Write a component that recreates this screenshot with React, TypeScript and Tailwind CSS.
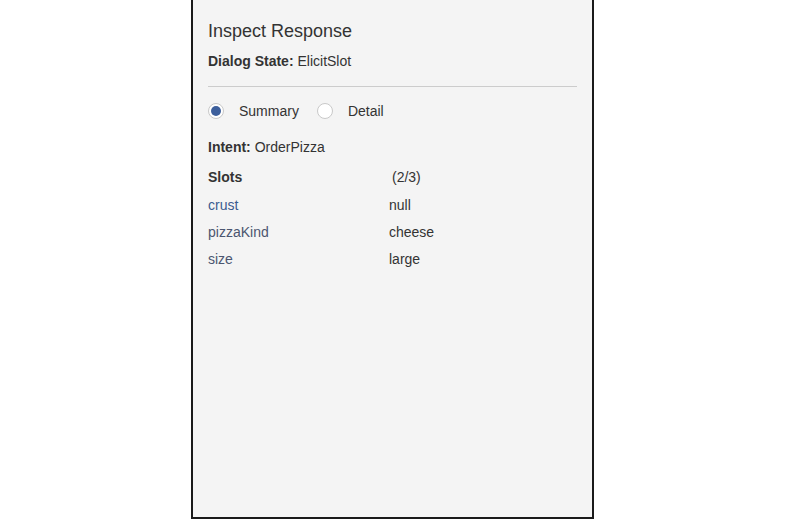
import React from 'react';

interface Slot {
    name: string;
    value: string;
    color: string;
}

const slots: Slot[] = [
    {name: 'crust', value: 'null', color: 'text-[#3a5b90]'},
    {name: 'pizzaKind', value: 'cheese', color: 'text-[#4b5670]'},
    {name: 'size', value: 'large', color: 'text-[#4b5670]'},
];

function Radio({checked, label}: { checked: boolean; label: string }) {
    return (
        <label className="flex items-center">
            <span className="w-[16px] h-[16px] rounded-full border border-[#c9c9c9] bg-white flex items-center justify-center">
                {checked && <span className="w-[10px] h-[10px] rounded-full bg-[#3d5f9c]"></span>}
            </span>
            <span className="ml-[15px]">{label}</span>
        </label>
    );
}

export default function App() {
    return (
        <div className="w-full h-[519px] bg-white flex justify-center text-[14px] text-[#333] font-[family-name:'Liberation_Sans',Arial,sans-serif]">
            <div className="w-[403px] h-[519px] bg-[#f4f4f4] border-x-2 border-b-2 border-[#1a1a1a] pl-[15px] pr-[15px] pt-[20px]">
                <h2 className="text-[18px] leading-[22px] text-[#333]">Inspect Response</h2>
                <div className="mt-[10px] leading-[18px]">
                    <span className="font-bold">Dialog State:</span> ElicitSlot
                </div>
                <hr className="mt-[16px] border-t border-[#cccccc]"/>
                <div className="mt-[15px] flex items-center gap-[18px] leading-[18px]">
                    <Radio checked label="Summary"/>
                    <Radio checked={false} label="Detail"/>
                </div>
                <div className="mt-[18px] leading-[18px]">
                    <span className="font-bold">Intent:</span> OrderPizza
                </div>
                <div className="mt-[12px] grid grid-cols-[181px_1fr] leading-[18px]">
                    <div className="font-bold">Slots</div>
                    <div className="pl-[3px]">(2/3)</div>
                </div>
                {slots.map((slot, i) => (
                    <div key={slot.name} className={(i === 0 ? 'mt-[10px]' : 'mt-[9px]') + ' grid grid-cols-[181px_1fr] leading-[18px]'}>
                        <div className={slot.color}>{slot.name}</div>
                        <div>{slot.value}</div>
                    </div>
                ))}
            </div>
        </div>
    );
}
